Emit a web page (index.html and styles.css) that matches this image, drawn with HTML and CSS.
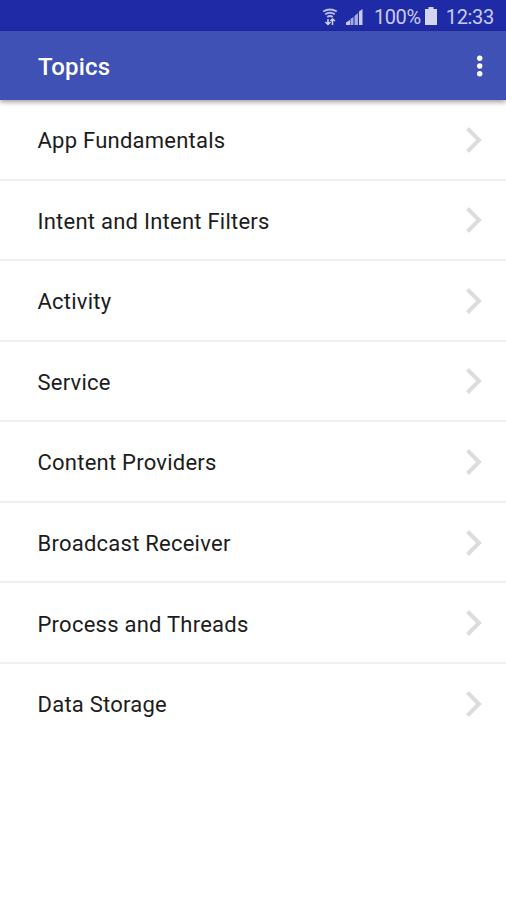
FILE: index.html
```html
<!DOCTYPE html>
<html lang="en">
<head>
<meta charset="utf-8">
<title>Topics</title>
<link rel="stylesheet" href="styles.css">
</head>
<body>
<div class="status">
  <svg class="wifi" width="16" height="18" viewBox="0 0 16 18" fill="none" stroke="#b9beea" stroke-width="2"><path d="M1.200 3.500Q8-.5 14.800 3.500M3.200 6.300Q8 3 12.800 6.300M5.200 9Q8 7 10.800 9"/><path d="M6 16.500V11M3.500 14L6 16.500 8.500 14M10.500 17v-6M8.500 13l2-2 2.500 2" stroke="#d3d5f1" stroke-width="1.500"/></svg>
  <svg class="signal" width="17" height="16" viewBox="0 0 17 16"><path d="M0 16v-2.500L4 11v5z" fill="#c9ccef"/><path d="M4.500 16v-6l3-2v8zM8.500 16V7l3.500-3v12z" fill="#a5abdf"/><path d="M13 16V2.500L16.500 0v16z" fill="#c9ccef"/></svg>
  <span class="percent">100%</span>
  <svg class="battery" width="12" height="18" viewBox="0 0 12 18" fill="#d3d5f1"><path d="M3.500 0h5v2H12v16H0V2h3.500z"/></svg>
  <span class="clock">12:33</span>
</div>
<header class="appbar">
  <h1>Topics</h1>
  <svg class="more" width="6" height="22" viewBox="0 0 6 22" fill="#fff"><circle cx="2.700" cy="3.300" r="2.700"/><circle cx="2.700" cy="11" r="2.700"/><circle cx="2.700" cy="18.700" r="2.700"/></svg>
</header>
<ul class="topics">
  <li><span>App Fundamentals</span><svg class="chev" viewBox="0 0 18 28"><path d="M2.500 2.500L14 14 2.500 25.500"/></svg></li>
  <li><span>Intent and Intent Filters</span><svg class="chev" viewBox="0 0 18 28"><path d="M2.500 2.500L14 14 2.500 25.500"/></svg></li>
  <li><span>Activity</span><svg class="chev" viewBox="0 0 18 28"><path d="M2.500 2.500L14 14 2.500 25.500"/></svg></li>
  <li><span>Service</span><svg class="chev" viewBox="0 0 18 28"><path d="M2.500 2.500L14 14 2.500 25.500"/></svg></li>
  <li><span>Content Providers</span><svg class="chev" viewBox="0 0 18 28"><path d="M2.500 2.500L14 14 2.500 25.500"/></svg></li>
  <li><span>Broadcast Receiver</span><svg class="chev" viewBox="0 0 18 28"><path d="M2.500 2.500L14 14 2.500 25.500"/></svg></li>
  <li><span>Process and Threads</span><svg class="chev" viewBox="0 0 18 28"><path d="M2.500 2.500L14 14 2.500 25.500"/></svg></li>
  <li><span>Data Storage</span><svg class="chev" viewBox="0 0 18 28"><path d="M2.500 2.500L14 14 2.500 25.500"/></svg></li>
</ul>
</body>
</html>
```
FILE: styles.css
```css
* { box-sizing: border-box; }
body { margin: 0; min-height: 900px; background: #fff; color: #1c1c1c; font-family: Roboto, sans-serif; }
.status { display: flex; align-items: center; justify-content: flex-end; height: 31px; padding: 3px 12px 0 0; background: #1f2aa6; color: #c9ccef; font-size: 20px; line-height: 28px; }
.signal { margin-left: 8px; }
.percent { margin-left: 11px; letter-spacing: -.4px; }
.battery { margin-left: 4px; margin-top: -2px; }
.clock { margin-left: 9px; letter-spacing: -.3px; }
.appbar { display: flex; align-items: center; justify-content: space-between; height: 69px; padding: 2px 23px 0 38px; background: #3f51b5; color: #fff; box-shadow: 0 2px 5px rgba(0,0,0,.4); }
.more { margin-top: -1px; }
h1 { margin: 0; font-size: 24px; font-weight: 500; letter-spacing: .2px; }
.topics { margin: 0; padding: 0; list-style: none; }
.topics li { display: flex; align-items: center; justify-content: space-between; height: 80.550px; padding: 1px 23px 0 37.500px; border-bottom: 2px solid #f0f0f0; font-size: 22px; letter-spacing: .24px; }
.topics li > span { padding-top: 2px; }
.topics li:last-child { border-color: transparent; }
.chev { width: 18px; height: 28px; fill: none; stroke: #dcdcdc; stroke-width: 4; }
```
